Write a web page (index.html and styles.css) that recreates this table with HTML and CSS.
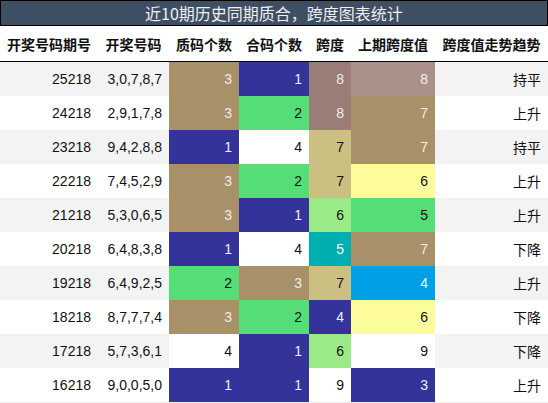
FILE: index.html
```html
<!DOCTYPE html>
<html lang="zh-CN">
  <head>
    <meta charset="UTF-8" />
    <meta name="viewport" content="width=device-width, initial-scale=1.0" />
    <title>近10期历史同期质合，跨度图表统计</title>
    <link rel="stylesheet" href="styles.css">
  </head>
  <body>
    <div class="report">
      <div class="title">近10期历史同期质合，跨度图表统计</div>
      <table class="stats">
        <colgroup>
          <col class="c-issue" />
          <col class="c-nums" />
          <col class="c-prime" />
          <col class="c-comp" />
          <col class="c-span" />
          <col class="c-prev" />
          <col class="c-trend" />
        </colgroup>
        <thead>
          <tr>
            <th>开奖号码期号</th>
            <th>开奖号码</th>
            <th>质码个数</th>
            <th>合码个数</th>
            <th>跨度</th>
            <th>上期跨度值</th>
            <th>跨度值走势趋势</th>
          </tr>
        </thead>
        <tbody>
          <tr>
            <td>25218</td><td>3,0,7,8,7</td>
            <td class="brown">3</td><td class="blue">1</td>
            <td class="mauve">8</td><td class="rose">8</td>
            <td class="trend">持平</td>
          </tr>
          <tr>
            <td>24218</td><td>2,9,1,7,8</td>
            <td class="brown">3</td><td class="green">2</td>
            <td class="mauve">8</td><td class="brown">7</td>
            <td class="trend">上升</td>
          </tr>
          <tr>
            <td>23218</td><td>9,4,2,8,8</td>
            <td class="blue">1</td><td class="white">4</td>
            <td class="khaki">7</td><td class="brown">7</td>
            <td class="trend">持平</td>
          </tr>
          <tr>
            <td>22218</td><td>7,4,5,2,9</td>
            <td class="brown">3</td><td class="green">2</td>
            <td class="khaki">7</td><td class="yellow">6</td>
            <td class="trend">上升</td>
          </tr>
          <tr>
            <td>21218</td><td>5,3,0,6,5</td>
            <td class="brown">3</td><td class="blue">1</td>
            <td class="lime">6</td><td class="green">5</td>
            <td class="trend">上升</td>
          </tr>
          <tr>
            <td>20218</td><td>6,4,8,3,8</td>
            <td class="blue">1</td><td class="white">4</td>
            <td class="teal">5</td><td class="brown">7</td>
            <td class="trend">下降</td>
          </tr>
          <tr>
            <td>19218</td><td>6,4,9,2,5</td>
            <td class="green">2</td><td class="brown">3</td>
            <td class="khaki">7</td><td class="sky">4</td>
            <td class="trend">上升</td>
          </tr>
          <tr>
            <td>18218</td><td>8,7,7,7,4</td>
            <td class="brown">3</td><td class="green">2</td>
            <td class="blue">4</td><td class="yellow">6</td>
            <td class="trend">下降</td>
          </tr>
          <tr>
            <td>17218</td><td>5,7,3,6,1</td>
            <td class="white">4</td><td class="blue">1</td>
            <td class="lime">6</td><td class="white">9</td>
            <td class="trend">下降</td>
          </tr>
          <tr>
            <td>16218</td><td>9,0,0,5,0</td>
            <td class="blue">1</td><td class="blue">1</td>
            <td class="white">9</td><td class="blue">3</td>
            <td class="trend">上升</td>
          </tr>
        </tbody>
      </table>
    </div>
  </body>
</html>
```

FILE: styles.css
```css
body {
  margin: 0;
  padding: 0;
  background-color: #fff;
  font-family: "Liberation Sans", "Noto Sans CJK SC", sans-serif;
}

.report {
  width: 548px;
}

.title {
  height: 24px;
  line-height: 24px;
  border: 1px solid #000;
  background-color: #3e4f63;
  color: #eef0f2;
  font-family: "Noto Sans CJK SC", sans-serif;
  font-size: 16px;
  text-align: center;
  box-sizing: content-box;
  width: 546px;
}

.stats {
  width: 548px;
  border-collapse: collapse;
  table-layout: fixed;
  font-size: 14px;
}

/* Column widths */
.c-issue { width: 98px; }
.c-nums { width: 71px; }
.c-prime { width: 70px; }
.c-comp { width: 70px; }
.c-span { width: 42px; }
.c-prev { width: 84px; }
.c-trend { width: 113px; }

.stats th {
  height: 35px;
  padding: 0;
  font-family: "Noto Sans CJK SC", sans-serif;
  font-weight: 700;
  font-size: 14px;
  color: #111;
  text-align: center;
  white-space: nowrap;
  border-bottom: 1px solid #000;
}

.stats td {
  height: 34px;
  padding: 0 7px 0 0;
  text-align: right;
  color: #111;
  white-space: nowrap;
}

.stats tbody tr:nth-child(odd) td {
  background-color: #f3f3f3;
}

.stats tbody tr:last-child td {
  border-bottom: 1px solid #eee;
}

.trend {
  font-family: "Noto Sans CJK SC", sans-serif;
}

/* Cell colours */
.stats tbody tr td.brown { background-color: #a89169; color: #f0ede6; }
.stats tbody tr td.blue { background-color: #333399; color: #eeeef6; }
.stats tbody tr td.green { background-color: #55dd77; color: #111; }
.stats tbody tr td.mauve { background-color: #9a7d76; color: #f0ecea; }
.stats tbody tr td.rose { background-color: #aa928a; color: #f2efee; }
.stats tbody tr td.khaki { background-color: #cbbf81; color: #111; }
.stats tbody tr td.yellow { background-color: #fcfc9b; color: #111; }
.stats tbody tr td.lime { background-color: #9aeb88; color: #111; }
.stats tbody tr td.teal { background-color: #00b0b0; color: #eefafa; }
.stats tbody tr td.sky { background-color: #00a0e6; color: #eef8fd; }
.stats tbody tr td.white { background-color: #fff; color: #111; }
```
